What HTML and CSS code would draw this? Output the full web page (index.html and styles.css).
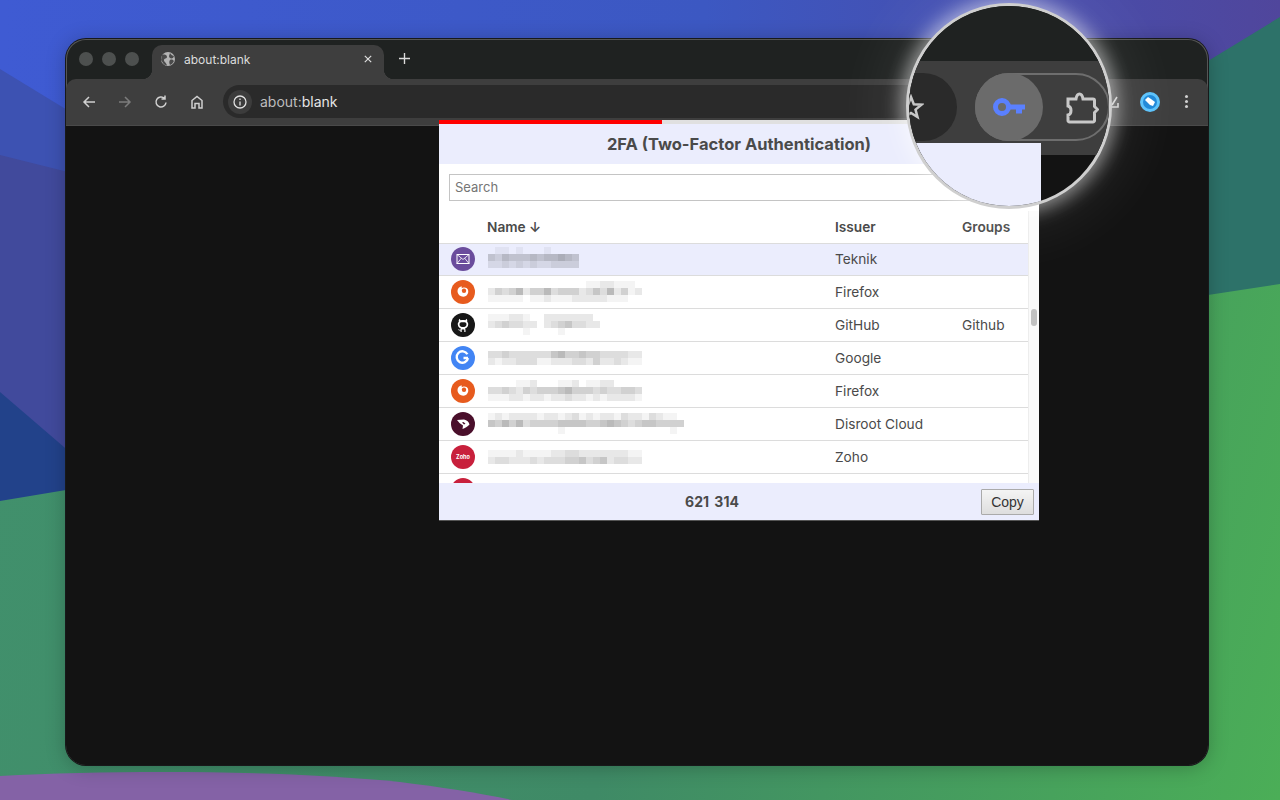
FILE: index.html
```html
<!DOCTYPE html>
<html lang="en">
  <head>
    <meta charset="UTF-8" />
    <title>about:blank</title>
    <link rel="stylesheet" href="styles.css">
  </head>

  <body>
    <!-- desktop wallpaper -->
    <svg class="wallpaper" viewBox="0 0 1280 800" preserveAspectRatio="none" aria-hidden="true">
      <defs>
        <linearGradient id="wpSky" x1="0" y1="0" x2="1" y2="0">
          <stop offset="0" stop-color="#3f5bd3" />
          <stop offset="0.55" stop-color="#3c58c2" />
          <stop offset="1" stop-color="#50469c" />
        </linearGradient>
        <linearGradient id="wpGreen" gradientUnits="userSpaceOnUse" x1="0" y1="450" x2="1280" y2="800">
          <stop offset="0" stop-color="#41906c" />
          <stop offset="0.5" stop-color="#3f8a66" />
          <stop offset="1" stop-color="#4bae57" />
        </linearGradient>
      </defs>
      <rect width="1280" height="800" fill="url(#wpSky)" />
      <path d="M0 69 L100 130 L100 560 L0 560 Z" fill="#3d52b2" />
      <path d="M0 155 L100 180 L100 560 L0 560 Z" fill="#414a9c" />
      <path d="M0 392 L100 478 L100 560 L0 560 Z" fill="#22428a" />
      <path d="M1180 78 L1280 17 L1280 340 L1180 340 Z" fill="#2d7269" />
      <path d="M0 501 L66 490 L1208 295 L1280 284 L1280 800 L0 800 Z" fill="url(#wpGreen)" />
      <path d="M0 776 C120 770 280 770 400 782 C440 787 480 793 512 800 L0 800 Z" fill="#8462a6" />
    </svg>

    <section class="window">
      <header class="tabstrip">
        <div class="lights"><i></i><i></i><i></i></div>
        <div class="tab">
          <svg class="globe" viewBox="0 0 14 14">
            <circle cx="7" cy="7" r="7" fill="#b4b4b4" />
            <path d="M1 3 C4 2 6 3 6 5 C6 7 3 6 3 8 C3 10 5 10 6 13.500 L3 12.500 L0 8 Z M9 1 C10 3 12 4 13 4 L12 6 C10 7 8 6 8 4 Z M9 8 C11 7 12 8 13 9 C12 11 11 12 9 13 C8 11 8 9 9 8 Z" fill="#4a4a4a" />
          </svg>
          <span class="tab-title">about:blank</span>
          <svg class="tab-close" viewBox="0 0 10 10"><path d="M1 1 9 9 M9 1 1 9" /></svg>
        </div>
        <svg class="new-tab" viewBox="0 0 12 12"><path d="M6 0V12 M0 6H12" /></svg>
      </header>

      <nav class="toolbar">
        <svg class="tool" viewBox="0 0 14 14"><path d="M13 7H2 M7 2 2 7 7 12" /></svg>
        <svg class="tool tool-off" viewBox="0 0 14 14"><path d="M1 7H12 M7 2 12 7 7 12" /></svg>
        <svg class="tool" viewBox="0 0 14 14"><path d="M12 7.500A5 5 0 1 1 10.500 3.400 M11 0.500V4H7.500" /></svg>
        <svg class="tool" viewBox="0 0 14 14"><path d="M2 13V5.500L7 1.500 12 5.500V13H9V8.500H5V13Z" /></svg>
        <div class="omnibox">
          <span class="info">
            <svg viewBox="0 0 14 14"><circle cx="7" cy="7" r="6" /><path d="M7 6.500V10.500 M7 3.500V5" /></svg>
          </span>
          <span class="url">about:<b>blank</b></span>
        </div>
        <svg class="pin-peek" viewBox="0 0 10 12"><path d="M8 1 3 9 M1 11H9V7" /></svg>
        <span class="avatar">
          <svg viewBox="0 0 20 20">
            <circle cx="10" cy="10" r="10" fill="#5cc3fb" />
            <circle cx="10" cy="10" r="7" fill="#1e88d8" />
            <path d="M5 8 8 5 11 7 15 10 13 14 10 13 8 11Z" fill="#fff" />
          </svg>
        </span>
        <span class="dots"><i></i><i></i><i></i></span>
      </nav>

      <div class="content"></div>
    </section>

    <!-- extension popup -->
    <section class="popup">
      <div class="progress"><div class="progress-fill"></div></div>
      <h1 class="popup-title">2FA (Two-Factor Authentication)</h1>
      <div class="popup-search">
        <input class="search" type="text" placeholder="Search" />
      </div>
      <div class="list-wrap">
        <div class="list">
          <div class="row row-head">
            <span></span>
            <span>Name ↓</span>
            <span>Issuer</span>
            <span>Groups</span>
          </div>

          <div class="row row-first row-active">
            <svg class="ico" viewBox="0 0 24 24">
              <circle cx="12" cy="12" r="12" fill="#6a4c9c" />
              <rect x="6" y="7.500" width="12" height="9" fill="none" stroke="#fff" />
              <path d="M6 7.500 12 12.500 18 7.500 M6 16.500 10.500 11 M18 16.500 13.500 11" fill="none" stroke="#fff" stroke-width="0.800" />
            </svg>
            <canvas class="blur blur-up" data-cells="0110100010000/4354445455654/2232323223333"></canvas>
            <span>Teknik</span>
            <span></span>
          </div>

          <div class="row">
            <svg class="ico" viewBox="0 0 24 24"><use href="#firefox" /></svg>
            <canvas class="blur" data-cells="00000000000000112211100/24346244634442353624120/11111011211122222111000"></canvas>
            <span>Firefox</span>
            <span></span>
          </div>

          <div class="row">
            <svg class="ico" viewBox="0 0 24 24">
              <circle cx="12" cy="12" r="12" fill="#171717" />
              <path d="M8.300 5.800 9.700 7.300C11 7 13 7 14.300 7.300L15.700 5.800C16.300 6.800 16.400 7.800 16.200 8.700C17 9.500 17.300 10.500 17.200 11.500C17 14 15.300 15.300 13.900 15.500C14.300 15.900 14.500 16.400 14.500 17V19H9.500V17.500C8.500 17.800 7.500 17.400 6.800 16.200L7.800 16.500C8.300 16.900 8.900 16.900 9.500 16.700C9.500 16.200 9.700 15.800 10.100 15.500C8.700 15.300 7 14 6.800 11.500C6.700 10.500 7 9.500 7.800 8.700C7.600 7.800 7.700 6.800 8.300 5.800Z" fill="#fff" />
              <path d="M9 9.800C10.500 9.200 13.500 9.200 15 9.800C15.800 11 15.800 13 14 13.700C12.800 14.100 11.200 14.100 10 13.700C8.200 13 8.200 11 9 9.800Z M10.700 16.500H13.300V19.300H10.700Z" fill="#171717" />
            </svg>
            <canvas class="blur" data-cells="1112210022222220/2343322023453322/0000010000100000"></canvas>
            <span>GitHub</span>
            <span>Github</span>
          </div>

          <div class="row">
            <svg class="ico" viewBox="0 0 24 24">
              <circle cx="12" cy="12" r="12" fill="#4285f4" />
              <path d="M17 12H12.500 M16.400 8.300A5.700 5.700 0 1 0 17 12" fill="none" stroke="#fff" stroke-width="2.400" />
            </svg>
            <canvas class="blur" data-cells="3343333335644544333322/2122333112223324223211"></canvas>
            <span>Google</span>
            <span></span>
          </div>

          <div class="row">
            <svg class="ico" viewBox="0 0 24 24"><use href="#firefox" /></svg>
            <canvas class="blur" data-cells="0000112000112011220000/3343243444564443433443/1112212212232212122221"></canvas>
            <span>Firefox</span>
            <span></span>
          </div>

          <div class="row">
            <svg class="ico" viewBox="0 0 24 24">
              <circle cx="12" cy="12" r="12" fill="#4a0f2b" />
              <path d="M6 8 13 7.500C16 8 18 10 18.500 12.500C16.500 15 14 16 11.500 17L12 13.500 8.500 11Z M11 10.500 13 12.500 14.500 11.800 12.500 10Z" fill="#fff" fill-rule="evenodd" />
            </svg>
            <canvas class="blur" data-cells="1212222122123121221322132110/5464634444555544565434554444/0000000000100000000000000010"></canvas>
            <span>Disroot Cloud</span>
            <span></span>
          </div>

          <div class="row">
            <svg class="ico" viewBox="0 0 24 24">
              <circle cx="12" cy="12" r="12" fill="#c8203c" />
              <text class="ico-text" x="12" y="14" text-anchor="middle">Zoho</text>
            </svg>
            <canvas class="blur" data-cells="1111211112233222222211/2332223233344534523322"></canvas>
            <span>Zoho</span>
            <span></span>
          </div>

          <div class="row">
            <svg class="ico" viewBox="0 0 24 24"><circle cx="12" cy="12" r="12" fill="#c8203c" /></svg>
            <span></span>
            <span></span>
            <span></span>
          </div>
        </div>
        <div class="scrollbar"><div class="thumb"></div></div>
      </div>
      <footer class="popup-foot">
        <span class="code">621 314</span>
        <button class="copy" type="button">Copy</button>
      </footer>
    </section>

    <!-- magnifier over the toolbar -->
    <div class="lens">
      <div class="lens-strip"></div>
      <div class="lens-toolbar">
        <div class="lens-omni">
          <svg class="lens-star" viewBox="0 0 26 26"><path d="M13 3 15.800 10.200 23.500 10.700 17.500 15.600 19.500 23 13 18.900 6.500 23 8.500 15.600 2.500 10.700 10.200 10.200Z" /></svg>
        </div>
        <div class="lens-pill">
          <span class="lens-active">
            <svg class="lens-key" viewBox="0 0 32 18">
              <circle cx="9" cy="9" r="6.500" fill="none" stroke="#5a80ff" stroke-width="5" />
              <path d="M14 6.500H32V11.500H29V15.500H23V11.500H14Z" fill="#5a80ff" />
            </svg>
          </span>
          <svg class="lens-puzzle" viewBox="0 0 33 33">
            <path d="M2 8H10C10.500 5 11.500 3 13.500 3C15.500 3 16.500 5 17 8H27A1.500 1.500 0 0 1 28.500 9.500V15.500L31.500 18.500 28.500 21.500V29.500A1.500 1.500 0 0 1 27 31H3.500A1.500 1.500 0 0 1 2 29.500V24C6 23 6 16 2 15Z" />
          </svg>
        </div>
      </div>
      <div class="lens-popup"></div>
    </div>

    <svg class="sprites" aria-hidden="true">
      <symbol id="firefox" viewBox="0 0 24 24">
        <circle cx="12" cy="12" r="12" fill="#e75b1e" />
        <path d="M6.500 11C6.500 8.500 8.500 6.500 11 6.500L10.500 8.200C11.500 7.500 14 7 15.500 8C18 9.500 18 14 14.800 16C11.500 18 6.500 15.500 6.500 11Z" fill="#fff" />
        <circle cx="13" cy="10.800" r="2.200" fill="#e75b1e" />
      </symbol>
    </svg>

    <script src="mosaic.js"></script>
  </body>
</html>
```

FILE: styles.css
```css
html {
  box-sizing: border-box;
  font-family: Inter, "Liberation Sans", sans-serif;
  font-size: 13.7px;
}

*,
*:before,
*:after {
  box-sizing: inherit;
}

body {
  margin: 0;
  width: 1280px;
  height: 800px;
  overflow: hidden;
  position: relative;
  background-color: #3f5cd6;
}

.wallpaper {
  position: absolute;
  left: 0;
  top: 0;
  width: 1280px;
  height: 800px;
}

.sprites {
  display: none;
}

/* browser window */
.window {
  position: absolute;
  left: 66px;
  top: 39px;
  width: 1142px;
  height: 726px;
  display: flex;
  flex-direction: column;
  border-radius: 20px;
  overflow: hidden;
  background-color: #1f2221;
  box-shadow: 0 0 0 1px #17191a, inset 0 0 0 1px #555, 0 2px 20px rgba(0, 0, 0, 0.25);
}

.tabstrip {
  height: 40px;
  flex-shrink: 0;
  display: flex;
  align-items: flex-end;
  padding-left: 86px;
  position: relative;
}

.lights {
  position: absolute;
  left: 13px;
  top: 13px;
  display: flex;
  gap: 9px;
}

.lights i {
  width: 14px;
  height: 14px;
  border-radius: 50%;
  background-color: #4d504f;
}

.tab {
  width: 232px;
  height: 34px;
  display: flex;
  align-items: center;
  padding: 0 12px 6px 9px;
  background-color: #3e3e3e;
  border-radius: 10px 10px 0 0;
  position: relative;
  color: #dcdcdc;
  font-size: 12px;
}

.tab:before,
.tab:after {
  content: "";
  position: absolute;
  bottom: 0;
  width: 10px;
  height: 10px;
}

.tab:before {
  left: -10px;
  background: radial-gradient(circle at 0 0, transparent 10px, #3e3e3e 10.5px);
}

.tab:after {
  right: -10px;
  background: radial-gradient(circle at 100% 0, transparent 10px, #3e3e3e 10.5px);
}

.globe {
  width: 14px;
  height: 14px;
  flex-shrink: 0;
}

.tab-title {
  flex-grow: 1;
  margin-left: 9px;
}

.tab-close {
  width: 8px;
  height: 8px;
  fill: none;
  stroke: #dcdcdc;
  stroke-width: 1.5;
}

.new-tab {
  width: 11px;
  height: 11px;
  margin: 0 0 15px 15px;
  fill: none;
  stroke: #dcdcdc;
  stroke-width: 1.5;
}

.toolbar {
  height: 47px;
  flex-shrink: 0;
  display: flex;
  align-items: center;
  padding: 0 0 1px 16px;
  background-color: #3e3e3e;
  border-radius: 10px 10px 0 0;
  border-bottom: 1px solid #4a4a4a;
  position: relative;
}

.tool {
  width: 14px;
  height: 14px;
  flex-shrink: 0;
  margin-right: 22px;
  fill: none;
  stroke: #d0d0d0;
  stroke-width: 1.5;
}

.tool-off {
  stroke: #7c7c7c;
}

.omnibox {
  width: 860px;
  height: 33px;
  flex-shrink: 0;
  margin-left: -3px;
  display: flex;
  align-items: center;
  padding-left: 5px;
  border-radius: 17px;
  background-color: #2a2a2a;
}

.info {
  width: 24px;
  height: 24px;
  display: flex;
  align-items: center;
  justify-content: center;
  border-radius: 50%;
  background-color: #3c3c3c;
}

.info svg {
  width: 14px;
  height: 14px;
  fill: none;
  stroke: #e0e0e0;
  stroke-width: 1.3;
}

.url {
  margin-left: 8px;
  color: #bdbdbd;
  font-size: 14px;
}

.url b {
  color: #e6e6e6;
  font-weight: 400;
}

.pin-peek {
  width: 10px;
  height: 12px;
  margin-left: 26px;
  fill: none;
  stroke: #c8c8c8;
  stroke-width: 1.6;
}

.avatar {
  width: 20px;
  height: 20px;
  margin-left: 21px;
}

.avatar svg {
  display: block;
}

.dots {
  display: flex;
  flex-direction: column;
  gap: 2px;
  margin-left: 25px;
}

.dots i {
  width: 3px;
  height: 3px;
  border-radius: 50%;
  background-color: #d0d0d0;
}

.content {
  flex-grow: 1;
  background-color: #131313;
}

/* popup */
.popup {
  position: absolute;
  left: 439px;
  top: 120px;
  width: 600px;
  height: 400px;
  display: flex;
  flex-direction: column;
  background-color: #fff;
  color: #4a4a4a;
  box-shadow: 0 1px 0 #555;
}

.progress {
  height: 4px;
  background-color: #e0e0e0;
}

.progress-fill {
  width: 37.2%;
  height: 100%;
  background-color: #f00;
}

.popup-title {
  margin: 0;
  height: 40px;
  line-height: 40px;
  text-align: center;
  font-size: 16.5px;
  font-weight: 700;
  background-color: #ebedfd;
}

.popup-search {
  padding: 10px 20px 10px 10px;
}

.search {
  display: block;
  width: 100%;
  height: 27px;
  padding: 0 5px;
  border: 1px solid #c4c4c4;
  font-family: inherit;
  font-size: 13px;
  background-color: #fff;
}

.search::placeholder {
  color: #757575;
}

.list-wrap {
  flex-grow: 1;
  min-height: 0;
  display: flex;
}

.list {
  flex-grow: 1;
  overflow: hidden;
}

.row {
  height: 33px;
  display: grid;
  grid-template-columns: 48px 348px 127px 1fr;
  align-items: center;
  border-bottom: 1px solid #dcdcdc;
}

.row-head {
  font-weight: 600;
}

.row-first {
  height: 32px;
}

.row-active {
  background-color: #ebedfd;
}

.ico {
  width: 24px;
  height: 24px;
  margin-left: 12px;
  display: block;
}

.ico-text {
  font-size: 5.500px;
  font-weight: 700;
  fill: #fff;
}

.blur {
  display: block;
  margin-left: 1px;
}

.blur-up {
  margin-top: -4px;
}

.scrollbar {
  width: 11px;
  flex-shrink: 0;
  background-color: #fafafa;
  border-left: 1px solid #ededed;
  padding: 98px 2px 0 2px;
}

.thumb {
  width: 6px;
  height: 17px;
  border-radius: 3px;
  background-color: #c1c1c1;
}

.popup-foot {
  height: 37px;
  flex-shrink: 0;
  display: flex;
  align-items: center;
  gap: 6px;
  padding: 0 5px 0 10px;
  background-color: #ebedfd;
}

.code {
  flex-grow: 1;
  text-align: center;
  font-size: 14px;
  font-weight: 700;
  word-spacing: 2px;
}

.copy {
  width: 53px;
  height: 26px;
  padding: 0;
  border: 1px solid #aaa;
  border-radius: 1px;
  background: linear-gradient(#f4f4f4, #dedede);
  color: #333;
  font-family: "Liberation Sans", sans-serif;
  font-size: 14px;
}

/* magnifier */
.lens {
  position: absolute;
  left: 906px;
  top: 3px;
  width: 206px;
  height: 206px;
  border-radius: 50%;
  border: 3px solid #cfcfcf;
  overflow: hidden;
  display: flex;
  flex-direction: column;
  background-color: #131313;
  box-shadow: 0 0 18px 5px rgba(255, 255, 255, 0.5), 0 0 60px 24px rgba(255, 255, 255, 0.07);
}

.lens-strip {
  height: 55px;
  flex-shrink: 0;
  background-color: #1f2221;
}

.lens-toolbar {
  height: 94px;
  flex-shrink: 0;
  display: flex;
  align-items: flex-start;
  padding-top: 12px;
  background-color: #3e3e3e;
}

.lens-omni {
  width: 48px;
  height: 68px;
  flex-shrink: 0;
  display: flex;
  align-items: center;
  background-color: #2a2a2a;
  border-radius: 0 34px 34px 0;
}

.lens-star {
  width: 26px;
  height: 26px;
  margin-left: -11px;
  flex-shrink: 0;
  fill: none;
  stroke: #c8c8c8;
  stroke-width: 2.500;
}

.lens-pill {
  width: 135px;
  height: 68px;
  flex-shrink: 0;
  margin-left: 18px;
  display: flex;
  align-items: center;
  border: 2px solid #6e6e6e;
  border-radius: 34px;
}

.lens-active {
  width: 68px;
  height: 68px;
  flex-shrink: 0;
  margin-left: -2px;
  display: flex;
  align-items: center;
  justify-content: center;
  border-radius: 50%;
  background-color: #6b6b6b;
}

.lens-key {
  width: 32px;
  height: 18px;
}

.lens-puzzle {
  width: 33px;
  height: 33px;
  flex-shrink: 0;
  margin-left: 23px;
  fill: none;
  stroke: #c8c8c8;
  stroke-width: 3;
}

.lens-popup {
  position: absolute;
  left: 0;
  top: 137px;
  width: 132px;
  height: 70px;
  background-color: #ebedfd;
}
```

FILE: mosaic.js
```js
// Pixelated (censored) account names, each digit is how dark a 7px cell is
const CELL = 7;

document.querySelectorAll(".blur").forEach(($c) => {
  const lines = $c.dataset.cells.split("/");
  $c.width = lines[0].length * CELL;
  $c.height = lines.length * CELL;
  const ctx = $c.getContext("2d");

  lines.forEach((line, y) => {
    [...line].forEach((d, x) => {
      ctx.fillStyle = `rgba(0, 0, 0, ${d * 0.045})`;
      ctx.fillRect(x * CELL, y * CELL, CELL, CELL);
    });
  });
});
```
